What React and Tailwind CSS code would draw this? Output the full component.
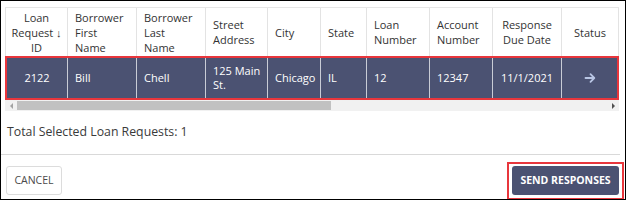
import React from "react";

const cols = [
  { w: 63, h: ["Loan", "Request ↓", "ID"], v: "2122", align: "center" },
  { w: 69, h: ["Borrower", "First", "Name"], v: "Bill" },
  { w: 69, h: ["Borrower", "Last", "Name"], v: "Chell" },
  { w: 62, h: ["Street", "Address"], v: ["125 Main", "St."] },
  { w: 53, h: ["City"], v: "Chicago" },
  { w: 46, h: ["State"], v: "IL" },
  { w: 63, h: ["Loan", "Number"], v: "12" },
  { w: 63, h: ["Account", "Number"], v: "12347" },
  { w: 69, h: ["Response", "Due Date"], v: "11/1/2021", align: "center" },
  { w: 57, h: ["Status"], v: "arrow", align: "center" },
];

function Arrow() {
  return (
    <svg width="12" height="12" viewBox="0 0 12 12" fill="none" stroke="#b9c6e4" strokeWidth="1.8" strokeLinecap="round" strokeLinejoin="round">
      <path d="M1.5 6h8.5M6.5 2.2L10.3 6 6.5 9.8" />
    </svg>
  );
}

export default function App() {
  return (
    <div
      className="w-[626px] h-[200px] border border-black bg-white text-[#333] overflow-hidden relative"
      style={{ fontFamily: '"Open Sans", sans-serif' }}
    >
      <div className="pr-[5px]">
        {/* table */}
        <div className="ml-[4px] mt-[6px] w-[614px]">
          <div className="flex h-[49px] border-t border-[#e6e6e6]">
            {cols.map((c, i) => (
              <div
                key={i}
                className={
                  "flex flex-col justify-center text-[11px] leading-[15px] border-r border-[#e3e3e3] px-[7px] " +
                  (i === 0 ? "border-l " : "") +
                  (c.align === "center" ? "items-center text-center" : "items-start")
                }
                style={{ width: c.w }}
              >
                {c.h.map((t, j) => (
                  <span key={j} className="whitespace-nowrap">{t}</span>
                ))}
              </div>
            ))}
          </div>
          <div className="flex h-[44px] border-2 border-[#e8363c] bg-[#4b5272] text-white">
            {cols.map((c, i) => (
              <div
                key={i}
                className={
                  "flex flex-col justify-center text-[11px] leading-[14px] px-[7px] " +
                  (i < cols.length - 1 ? "border-r border-[#c9ccd6] " : "") +
                  (c.align === "center" ? "items-center text-center" : "items-start")
                }
                style={{ width: i === 0 || i === cols.length - 1 ? c.w - 2 : c.w }}
              >
                {c.v === "arrow" ? (
                  <Arrow />
                ) : Array.isArray(c.v) ? (
                  c.v.map((t, j) => <span key={j} className="whitespace-nowrap">{t}</span>)
                ) : (
                  <span className="whitespace-nowrap">{c.v}</span>
                )}
              </div>
            ))}
          </div>
          {/* scrollbar */}
          <div className="flex items-center h-[11px] bg-[#f1f1f1]">
            <div className="w-[12px] flex justify-center">
              <div className="w-0 h-0 border-y-[3px] border-y-transparent border-r-[3px] border-r-[#a3a3a3]" />
            </div>
            <div className="w-[314px] h-[9px] bg-[#c1c1c1]" />
            <div className="flex-1" />
            <div className="w-[12px] flex justify-center">
              <div className="w-0 h-0 border-y-[3px] border-y-transparent border-l-[3px] border-l-[#505050]" />
            </div>
          </div>
        </div>
        <div className="h-[43px] flex items-center pl-[6px] text-[12.3px] text-[#3a3a3a]">
          Total Selected Loan Requests: 1
        </div>
        <div className="h-px bg-[#d9d9d9]" />
        <div className="flex justify-between items-start mt-[11px] pl-[5px]">
          <button className="h-[29px] w-[56px] border border-[#dcdcdc] rounded-[3px] bg-white text-[10.5px] text-[#4a4a4a]">
            CANCEL
          </button>
          <div className="border-2 border-[#e8363c] px-[3px] pt-[2px] pb-[3px] -mt-[4px] -mr-[4px]">
            <button className="h-[29px] w-[107px] rounded-[3px] bg-[#4b5272] text-white text-[10.5px] font-bold">
              SEND RESPONSES
            </button>
          </div>
        </div>
      </div>
    </div>
  );
}
